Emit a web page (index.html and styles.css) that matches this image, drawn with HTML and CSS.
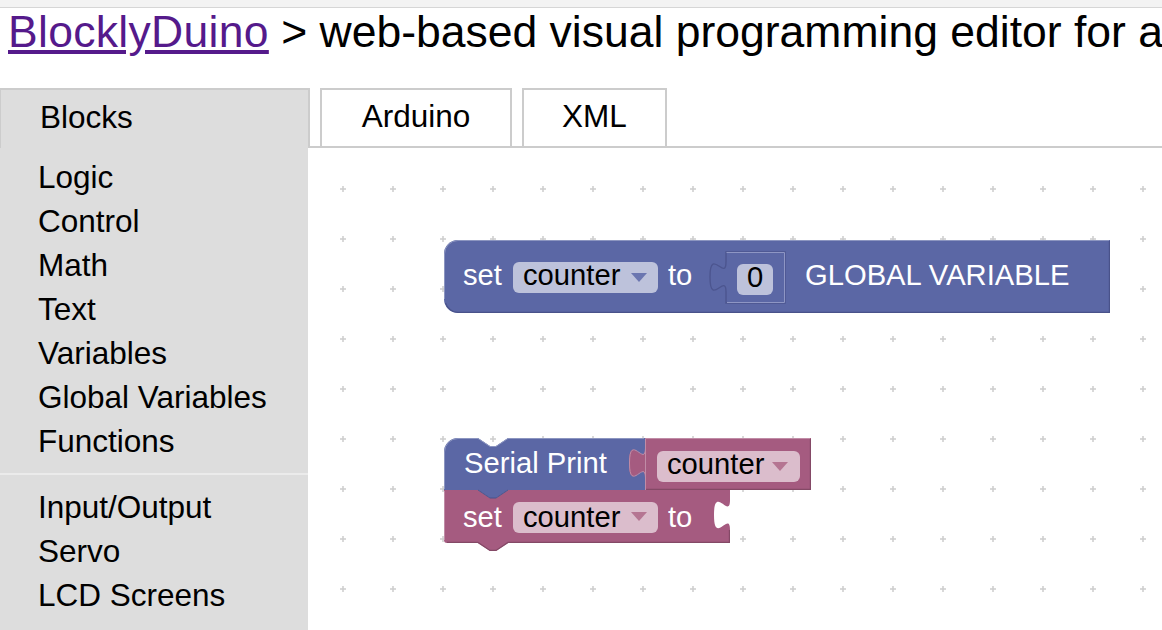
FILE: index.html
```html
<!DOCTYPE html>
<html>
<head>
<meta charset="utf-8">
<title>BlocklyDuino</title>
<link rel="stylesheet" href="styles.css">
</head>
<body>
<div class="topbar"></div>
<h1 class="title"><a class="title-link" href="#">BlocklyDuino</a> &gt; web-based visual programming editor for arduino</h1>
<div class="tabs">
  <div class="tab tab-on">Blocks</div>
  <div class="tab-gap"></div>
  <div class="tab tab-off tab-arduino">Arduino</div>
  <div class="tab-gap"></div>
  <div class="tab tab-off tab-xml">XML</div>
  <div class="tab-fill"></div>
</div>
<div class="main">
  <ul class="toolbox">
    <li class="cat">Logic</li>
    <li class="cat">Control</li>
    <li class="cat">Math</li>
    <li class="cat">Text</li>
    <li class="cat">Variables</li>
    <li class="cat">Global Variables</li>
    <li class="cat">Functions</li>
    <li class="sep"></li>
    <li class="cat">Input/Output</li>
    <li class="cat">Servo</li>
    <li class="cat">LCD Screens</li>
  </ul>
  <div class="workspace">
    <svg class="canvas" width="854" height="482" viewBox="308 148 854 482" xmlns="http://www.w3.org/2000/svg">
      <defs>
        <pattern id="grid" patternUnits="userSpaceOnUse" x="318" y="164" width="50" height="50">
          <path d="M22 25h6M25 22v6" stroke="#cdcdcd" stroke-width="1.5" fill="none"/>
        </pattern>
      </defs>
      <rect x="308" y="148" width="854" height="482" fill="url(#grid)"/>

      <!-- Global variable block -->
      <path fill="#5b67a5" d="M444,254 A14,14 0 0 1 458,240 H1110 V313 H458 A14,14 0 0 1 444,299 Z"/>
      <path fill="none" stroke="#8c95c0" stroke-width="1" d="M444.5,299 V254 A13.5,13.5 0 0 1 458,240.5 H1109"/>
      <path fill="none" stroke="#49528a" stroke-width="1.2" d="M1109.4,241 V312.4 H458 A13.5,13.5 0 0 1 445.5,303"/>
      <text class="bt" x="463" y="285">set</text>
      <rect x="513" y="262" width="145" height="31" rx="6" fill="#fff" fill-opacity="0.6"/>
      <text class="ft" x="523" y="285">counter</text>
      <polygon points="631,273 647,273 639,282" fill="#6b76b0"/>
      <text class="bt" x="668" y="285">to</text>
      <path fill="#5b67a5" stroke="#4c558f" stroke-width="1.4" d="M726,252 H785 V303 H726 V292 C726,272 710,308 710,277 C710,246 726,282 726,262 Z"/>
      <path fill="none" stroke="#8e96c4" stroke-width="1" d="M726.5,252.5 H784.5 V302.5 H727"/>
      <rect x="737" y="264" width="36" height="31" rx="6" fill="#fff" fill-opacity="0.6"/>
      <text class="ft" x="755" y="287" text-anchor="middle">0</text>
      <text class="bt" x="805" y="285">GLOBAL VARIABLE</text>

      <!-- set counter to (maroon) -->
      <path fill="#a55b80" d="M444,490 H478 l12,8 h6 l12,-8 H730 V500 c0,20 -16,-16 -16,15 s16,-5 16,15 V543 H508 l-12,8 h-6 l-12,-8 H447 A3,3 0 0 1 444,540 Z"/>
      <path fill="none" stroke="#844966" stroke-width="1.2" d="M729.4,530 V542.4 H508 l-12,8 h-6 l-12,-8 H447"/>
      <path fill="none" stroke="#c08ca6" stroke-width="1" d="M444.5,540 V491"/>
      <text class="bt" x="463" y="527">set</text>
      <rect x="513" y="502" width="145" height="31" rx="6" fill="#fff" fill-opacity="0.6"/>
      <text class="ft" x="523" y="527">counter</text>
      <polygon points="631,512 647,512 639,521" fill="#b57592"/>
      <text class="bt" x="668" y="527">to</text>

      <!-- Serial Print (blue) -->
      <path fill="#5b67a5" d="M444,452 A14,14 0 0 1 458,438 H478 l12,8 h6 l12,-8 H645 V490 H508 l-12,8 h-6 l-12,-8 H444 Z"/>
      <path fill="none" stroke="#8c95c0" stroke-width="1" d="M444.5,489 V452 A13.5,13.5 0 0 1 458,438.5 H478 l12,8 h6 l12,-8 H644"/>
      <path fill="none" stroke="#49528a" stroke-width="1" d="M508,490 l-12,8 h-6 l-12,-8"/>
      <text class="bt" x="464" y="473">Serial Print</text>

      <!-- variable getter (maroon) -->
      <path fill="#a55b80" d="M645,438 V448 c0,20 -16,-16 -16,15 s16,-5 16,15 V490 H811 V438 Z"/>
      <path fill="none" stroke="#c08ca6" stroke-width="1" d="M645.5,448 c0,20 -16,-16 -16,15 s16,-5 16,15 M645.5,490 V438.5 H810"/>
      <path fill="none" stroke="#844966" stroke-width="1.2" d="M810.4,439 V489.4 H646"/>
      <rect x="657" y="451" width="143" height="31" rx="6" fill="#fff" fill-opacity="0.6"/>
      <text class="ft" x="667" y="474">counter</text>
      <polygon points="772,462 788,462 780,471" fill="#b57592"/>
    </svg>
  </div>
</div>
</body>
</html>
```

FILE: styles.css
```css
html, body {
  margin: 0;
  padding: 0;
  width: 1162px;
  height: 630px;
  overflow: hidden;
  background: #fff;
  font-family: "Liberation Sans", Arial, Helvetica, sans-serif;
  color: #000;
}

.topbar {
  height: 7px;
  background: #f3f3f3;
  border-bottom: 1px solid #d6d6d6;
}

.title {
  margin: 2px 0 34px 0;
  padding-left: 8px;
  font-size: 44.5px;
  line-height: 44px;
  font-weight: normal;
  white-space: nowrap;
}

.title-link {
  color: #551a8b;
  text-decoration: underline;
  letter-spacing: 0.3px;
}

.tabs {
  display: flex;
  height: 60px;
}

.tab {
  box-sizing: border-box;
  height: 60px;
  font-size: 31.5px;
  display: flex;
  align-items: center;
  padding-bottom: 3px;
}

.tab-on {
  width: 310px;
  flex: none;
  background: #ddd;
  border-top: 2px solid #ccc;
  border-left: 1px solid #ccc;
  border-right: 2px solid #ccc;
  padding-left: 39px;
}

.tab-off {
  flex: none;
  justify-content: center;
  background: #fff;
  border: 2px solid #ccc;
}

.tab-arduino { width: 192px; }
.tab-xml { width: 145px; }

.tab-gap {
  flex: none;
  width: 10px;
  box-sizing: border-box;
  border-bottom: 2px solid #ccc;
}

.tab-fill {
  flex: 1;
  box-sizing: border-box;
  border-bottom: 2px solid #ccc;
}

.main {
  display: flex;
  height: 482px;
}

.toolbox {
  flex: none;
  width: 308px;
  box-sizing: border-box;
  margin: 0;
  padding: 6.5px 0 0 0;
  list-style: none;
  background: #ddd;
}

.cat {
  padding-left: 38px;
  font-size: 31.5px;
  line-height: 44px;
  white-space: nowrap;
}

.sep {
  height: 2px;
  margin: 10px 0;
  background: #ebebeb;
}

.workspace {
  flex: 1;
  overflow: hidden;
  background: #fff;
}

.canvas {
  display: block;
}

.bt {
  font-family: "Liberation Sans", Arial, Helvetica, sans-serif;
  font-size: 29.2px;
  fill: #fff;
}

.ft {
  font-family: "Liberation Sans", Arial, Helvetica, sans-serif;
  font-size: 29.2px;
  fill: #000;
}
```
